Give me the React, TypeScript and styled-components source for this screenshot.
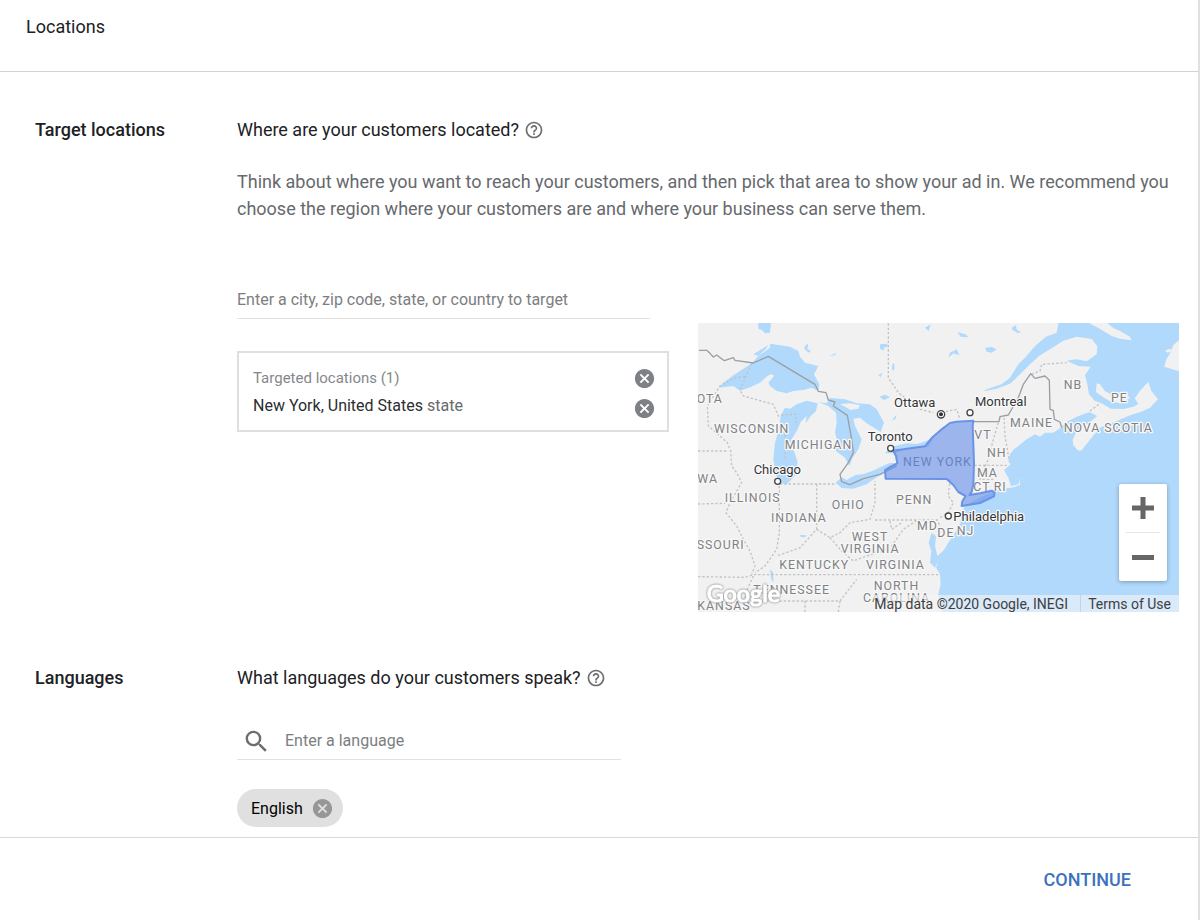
import React from "react";
import styled, { createGlobalStyle } from "styled-components";
import { MdCancel, MdHelpOutline, MdSearch } from "react-icons/md";

const GlobalStyle = createGlobalStyle`
  *, *::before, *::after { box-sizing: border-box; }
  body {
    margin: 0;
    background: #fff;
    color: #202124;
    font-family: Roboto, "Liberation Sans", sans-serif;
  }
  h1, h2, h3, p { margin: 0; }
`;

const Page = styled.div`
  display: flex;
  flex-direction: column;
  min-height: 100vh;
  border-right: 2px solid #e0e0e0;
`;

const Header = styled.header`
  padding: 15px 26px 32px;
  border-bottom: 1px solid #d2d2d2;
`;

const PageTitle = styled.h1`
  font-size: 18px;
  line-height: 24px;
  font-weight: 400;
`;

const Section = styled.section<{ $top: number }>`
  display: grid;
  grid-template-columns: 202px minmax(0, 1fr);
  padding: ${(p) => p.$top}px 19px 0 35px;
`;

const SectionTitle = styled.h2`
  font-size: 18px;
  line-height: 24px;
  font-weight: 500;
`;

const Question = styled.h3`
  display: flex;
  align-items: center;
  gap: 5px;
  font-size: 18px;
  line-height: 24px;
  font-weight: 400;
`;

const IconButton = styled.button<{ $color: string }>`
  display: inline-flex;
  align-items: center;
  justify-content: center;
  padding: 0;
  border: 0;
  background: none;
  color: ${(p) => p.$color};
  cursor: pointer;
`;

const Description = styled.p`
  margin-top: 26px;
  font-size: 18px;
  line-height: 27px;
  color: #66696d;
`;

const Targeting = styled.div`
  display: grid;
  grid-template-columns: minmax(0, 432fr) minmax(0, 481fr);
  gap: 29px;
  margin-top: 58px;
`;

const Field = styled.label<{ $width: number }>`
  display: flex;
  align-items: center;
  gap: 14px;
  height: 39px;
  width: ${(p) => p.$width}px;
  max-width: 100%;
  padding-top: 2px;
  border-bottom: 1px solid #e2e2e2;
  color: #6b6e71;
`;

const TextInput = styled.input`
  flex: 1;
  min-width: 0;
  padding: 0;
  border: 0;
  outline: 0;
  background: none;
  font: 400 16px/24px Roboto, "Liberation Sans", sans-serif;
  color: #202124;
  &::placeholder { color: #7b7e81; opacity: 1; }
`;

const LocationBox = styled.div`
  margin-top: 32px;
  padding: 10px 11px 7px 14px;
  border: 2px solid #dedfdf;
`;

const LocationRow = styled.div`
  display: flex;
  justify-content: space-between;
  height: 30px;
`;

const LocationCount = styled.span`
  font-size: 15px;
  line-height: 30px;
  color: #85888b;
`;

const LocationName = styled.span`
  font-size: 16px;
  line-height: 26px;
  color: #2b2d30;
`;

const LocationKind = styled.span`
  color: #66696d;
`;

const MapFrame = styled.div`
  position: relative;
  height: 289px;
  margin-top: 43px;
  overflow: hidden;
  background: #b1d9fc;
`;

const MapDrawing = styled.svg`
  display: block;
  width: 100%;
  height: 100%;
  font-family: Roboto, "Liberation Sans", sans-serif;
`;

const MapLogo = styled.text`
  font: 500 70px Lato, sans-serif;
  fill: #fff;
  stroke: #fff;
  stroke-width: 3px;
  filter: drop-shadow(0 0 3px #9a9c9e) drop-shadow(0 0 2px #b4b6b8);
`;

const ZoomControl = styled.div`
  position: absolute;
  right: 12px;
  bottom: 31px;
  display: flex;
  flex-direction: column;
  width: 48px;
  padding: 0 7px;
  border-radius: 2px;
  background: #fff;
  box-shadow: 0 1px 4px rgba(0, 0, 0, 0.3);
`;

const ZoomButton = styled.button`
  display: flex;
  align-items: center;
  justify-content: center;
  height: 48px;
  padding: 0;
  border: 0;
  background: none;
  color: #666;
  cursor: pointer;
  & + & { height: 49px; border-top: 1px solid #e6e6e6; }
`;

const Attribution = styled.div`
  position: absolute;
  right: 0;
  bottom: 0;
  display: flex;
  height: 17px;
  font-size: 14px;
  line-height: 18px;
  color: #3c4043;
  background: rgba(245, 245, 245, 0.6);
`;

const Credit = styled.span`
  padding-right: 12px;
`;

const TermsLink = styled.a`
  padding: 0 8px 0 7px;
  border-left: 1px solid #b9d6ee;
  color: inherit;
  text-decoration: none;
`;

const LanguageField = styled.div`
  margin-top: 31px;
`;

const SearchIcon = styled(MdSearch)`
  flex: none;
  margin-left: 5px;
`;

const Chip = styled.div`
  display: inline-flex;
  align-items: center;
  gap: 8px;
  height: 38px;
  margin-top: 29px;
  padding: 0 9px 0 14px;
  border-radius: 19px;
  background: #e0e0e0;
  color: #000;
  font-size: 16px;
`;

const Footer = styled.footer`
  display: flex;
  justify-content: flex-end;
  margin-top: 10px;
  padding: 24px 59px 22px;
  border-top: 1px solid #d8d8d8;
`;

const ContinueButton = styled.button`
  height: 36px;
  padding: 0 8px;
  border: 0;
  background: none;
  font: 500 18px/36px Roboto, "Liberation Sans", sans-serif;
  color: #3c72bd;
  cursor: pointer;
`;

const stateLabels: [string, number, number][] = [
  ["OTA", 20, 262],
  ["WISCONSIN", 72, 350],
  ["MICHIGAN", 284, 400],
  ["WA", 22, 501],
  ["ILLINOIS", 104, 557],
  ["INDIANA", 243, 619],
  ["OHIO", 425, 579],
  ["PENN", 618, 564],
  ["MD", 681, 642],
  ["WEST", 485, 675],
  ["VIRGINIA", 452, 711],
  ["SSOURI", 20, 699],
  ["KENTUCKY", 268, 760],
  ["VIRGINIA", 528, 760],
  ["TENNESSEE", 190, 835],
  ["NORTH", 551, 821],
  ["CAROLINA", 519, 857],
  ["KANSAS", 22, 882],
  ["NB", 1121, 219],
  ["PE", 1263, 259],
  ["MAINE", 960, 332],
  ["NOVA SCOTIA", 1121, 349],
  ["VT", 853, 368],
  ["NH", 891, 423],
  ["MA", 861, 482],
  ["CT", 850, 525],
  ["RI", 911, 525],
  ["DE", 742, 663],
  ["NJ", 800, 656],
];

const cityLabels: [string, number, number][] = [
  ["Ottawa", 612, 273],
  ["Montreal", 855, 270],
  ["Toronto", 533, 376],
  ["Chicago", 191, 474],
  ["Philadelphia", 790, 614],
];

const cityDots: [number, number][] = [
  [840, 290],
  [602, 397],
  [263, 496],
  [775, 600],
];

const lakes = [
  "M88 215 100 200 130 178 185 142 205 120 240 95 240 83 300 92 325 105 330 122 345 140 385 150 372 175 388 205 385 225 365 215 340 222 310 225 290 232 260 225 240 210 235 200 252 180 245 174 232 180 210 200 180 214 150 224 130 210Z",
  "M383 262 350 254 320 265 300 278 285 275 272 300 268 335 255 380 250 430 257 475 270 500 290 505 305 490 322 470 322 435 310 400 303 372 322 342 332 318 350 300 347 322 360 302 378 285Z",
  "M385 258 415 270 438 290 440 320 435 350 442 375 430 385 438 405 465 425 478 450 488 425 505 400 515 370 495 330 490 308 510 305 530 322 552 335 572 348 582 320 560 280 540 265 500 262 465 250 420 246 410 262Z",
  "M437 500 455 484 470 492 495 478 520 474 545 466 585 447 600 441 620 441 620 450 585 470 560 484 530 505 490 518 455 516Z",
  "M585 412 605 392 650 382 680 384 700 378 724 368 735 360 715 392 640 402 612 412Z",
  "M205 21 243 21 240 50 225 52 215 42 205 38Z",
  "M885 96 905 93 920 100 905 110 890 107Z",
  "M568 242 585 236 600 244 582 252Z",
  "M570 85 590 83 595 90 582 96 580 104 570 98Z",
  "M780 110 800 100 808 118 790 112 775 125Z",
  "M802 48 826 55 836 64 812 62Z",
  "M965 35 978 28 980 42 993 48 985 52 968 42Z",
  "M418 120 440 110 434 118Z",
  "M342 96 352 82 355 92 350 98 362 104 358 110 348 104Z",
  "M240 760 250 770 250 800 244 790Z",
  "M330 657 350 658 345 664 332 662Z",
  "M190 115 235 87 228 98 205 120Z",
  "M606 313 620 295 616 310Z",
  "M606 148 612 140 614 158 607 165Z",
  "M705 35 722 25 716 45Z",
  "M565 178 578 170 572 184Z",
  "M725 650 738 660 735 690 742 720 765 700 748 730 735 755 720 740 724 705 716 680Z",
];

const stateBorders =
  "M185 143 150 222 160 240 250 265 265 300 280 296 318 295 318 330M165 182 135 185 90 210 52 270 55 330 90 360 112 380 122 405 125 450 140 470 155 500 120 560 108 590 140 630 160 670 180 705 195 750 185 775M24 405 115 405M285 330 285 432M24 564 105 562M270 504 440 504M268 510 268 650 260 700 225 750 195 770M380 504 380 640 330 695 260 720M380 640 420 665 450 650 480 620 540 610 555 560 555 495M420 665 455 705 490 735 530 720 580 705 605 690 640 640 680 614M555 612 750 612M600 615 605 640 635 620M24 782 165 784 190 776 750 776M190 780 165 835 170 888M190 855 450 855 500 790M345 855 345 888M445 888 450 855M595 22 595 185 625 230 690 280 730 290M755 290 775 285 800 280 810 310M925 320 910 370 895 430 885 450M942 305 945 360 957 430M853 448 950 448M885 448 870 490 910 490M1025 175 1050 165 1055 145 1130 140M1200 285 1230 262M780 490 775 540 790 560 775 590 750 605M745 620 760 650";

const newYork =
  "M587 488 585 462 602 452 622 442 618 420 610 404 640 400 705 391 725 366 755 340 780 321 800 317 850 314 848 330 852 440 850 505 845 528 838 537 870 532 905 524 914 530 912 541 870 561 815 570 817 556 827 540 805 528 790 507 770 489Z";

function MapLand() {
  return (
    <>
      <rect x="24" y="21" width="1443" height="867" fill="#f1f1f1" />
      <path
        fill="#b1d9fc"
        d="M1105 21 1100 50 1068 62 1035 90 1005 125 985 145 960 185 935 205 890 220 880 226 920 218 960 203 990 175 1020 145 1050 118 1085 97 1120 74 1160 62 1205 69 1222 90 1220 115 1190 136 1160 130 1130 134 1165 150 1202 152 1185 178 1192 205 1197 235 1215 255 1235 262 1262 278 1300 279 1330 272 1345 264 1334 247 1352 222 1375 197 1384 225 1404 250 1380 275 1352 288 1320 298 1280 315 1230 335 1202 368 1175 403 1165 404 1150 388 1148 372 1160 345 1200 318 1222 300 1198 288 1160 302 1125 320 1112 335 1090 350 1065 350 1050 362 1035 355 1010 370 985 390 972 400 960 415 955 436 962 445 942 462 955 485 963 510 985 505 990 494 982 488 990 492 990 506 972 514 955 516 920 524 880 540 825 568 815 590 812 620 795 650 775 680 760 705 745 735 738 755 750 775 752 805 745 835 755 888 1467 888 1467 21Z"
      />
      <g fill="#b1d9fc">
        {lakes.map((d) => (
          <path key={d} d={d} />
        ))}
      </g>
      <g fill="#f1f1f1">
        <path d="M1197 21 1232 40 1265 60 1290 68 1325 73 1320 62 1290 45 1270 36 1252 21Z" />
        <path d="M1467 72 1450 88 1440 112 1428 132 1423 152 1467 166Z" />
        <path d="M1425 104 1440 98 1446 106 1432 110Z" />
        <path d="M1220 202 1230 205 1245 226 1270 238 1310 236 1320 246 1290 262 1260 256 1240 244 1218 228Z" />
        <path d="M450 264 480 262 510 268 505 278 482 282Z" />
        <path d="M738 640 785 640 765 672 752 700 742 712 740 680Z" />
      </g>
    </>
  );
}

function LocationMap() {
  return (
    <MapFrame>
      <MapDrawing
        viewBox="24 21 1443 867"
        preserveAspectRatio="xMidYMid slice"
        role="img"
        aria-label="Map with New York state highlighted"
      >
        <MapLand />
        <path d={stateBorders} fill="none" stroke="#c2c2c2" strokeWidth="4" strokeDasharray="7 6" />
        <path
          d="M27 103 50 103 60 112 70 123 80 117 103 134 130 125 135 133 190 141 235 121 375 205 385 226 408 230 415 252 435 258 430 270 472 298 485 370 490 410 475 440 450 475 455 497 480 506 520 488 570 475 620 450M850 317 927 317 930 302 955 297 985 245 1000 205 1022 173 1035 187 1065 180 1078 193 1080 280 1090 283 1093 310 1110 318 1115 335"
          fill="none"
          stroke="#9b9fa2"
          strokeWidth="4"
          strokeLinejoin="round"
        />
        <g
          fontSize="37"
          letterSpacing="3"
          fill="#7f8285"
          stroke="#f7f7f7"
          strokeWidth="8"
          strokeLinejoin="round"
          paintOrder="stroke"
        >
          {stateLabels.map(([name, x, y]) => (
            <text key={name + y + x} x={x} y={y}>
              {name}
            </text>
          ))}
        </g>
        <path d={newYork} fill="#5f8bea" fillOpacity="0.58" stroke="#6a93e6" strokeWidth="6" strokeLinejoin="round" />
        <text x="639" y="450" fontSize="37" letterSpacing="3" fill="#6783bf">
          NEW YORK
        </text>
        <g fill="#fff" stroke="#444" strokeWidth="4">
          {cityDots.map(([cx, cy]) => (
            <circle key={cx} cx={cx} cy={cy} r="9" />
          ))}
          <circle cx="753" cy="295" r="11" />
        </g>
        <circle cx="753" cy="295" r="6" fill="#333" />
        <g
          fontSize="39"
          fill="#333639"
          stroke="#fafafa"
          strokeWidth="7"
          strokeLinejoin="round"
          paintOrder="stroke"
        >
          {cityLabels.map(([name, x, y]) => (
            <text key={name} x={x} y={y}>
              {name}
            </text>
          ))}
        </g>
        <MapLogo x="50" y="858">
          Google
        </MapLogo>
      </MapDrawing>
      <ZoomControl>
        <ZoomButton type="button" aria-label="Zoom in">
          <svg width="22" height="22" viewBox="0 0 22 22" aria-hidden="true">
            <path d="M8.5 0h5v8.5H22v5h-8.500V22h-5v-8.500H0v-5h8.500z" fill="currentColor" />
          </svg>
        </ZoomButton>
        <ZoomButton type="button" aria-label="Zoom out">
          <svg width="22" height="22" viewBox="0 0 22 22" aria-hidden="true">
            <path d="M0 9h22v5H0z" fill="currentColor" />
          </svg>
        </ZoomButton>
      </ZoomControl>
      <Attribution>
        <Credit>Map data ©2020 Google, INEGI</Credit>
        <TermsLink href="#terms">Terms of Use</TermsLink>
      </Attribution>
    </MapFrame>
  );
}

export default function App() {
  return (
    <Page>
      <GlobalStyle />
      <Header>
        <PageTitle>Locations</PageTitle>
      </Header>
      <main>
        <Section $top={46}>
          <SectionTitle>Target locations</SectionTitle>
          <div>
            <Question>
              Where are your customers located?
              <IconButton type="button" $color="#6b6e71" aria-label="Help with locations">
                <MdHelpOutline size={20} />
              </IconButton>
            </Question>
            <Description>
              Think about where you want to reach your customers, and then pick that area to show your ad in. We
              recommend you choose the region where your customers are and where your business can serve them.
            </Description>
            <Targeting>
              <div>
                <Field $width={413}>
                  <TextInput
                    type="text"
                    aria-label="Location to target"
                    placeholder="Enter a city, zip code, state, or country to target"
                  />
                </Field>
                <LocationBox>
                  <LocationRow>
                    <LocationCount>Targeted locations (1)</LocationCount>
                    <IconButton type="button" $color="#7d8084" aria-label="Remove all locations">
                      <MdCancel size={23} />
                    </IconButton>
                  </LocationRow>
                  <LocationRow>
                    <LocationName>
                      New York, United States <LocationKind>state</LocationKind>
                    </LocationName>
                    <IconButton type="button" $color="#7d8084" aria-label="Remove New York">
                      <MdCancel size={23} />
                    </IconButton>
                  </LocationRow>
                </LocationBox>
              </div>
              <LocationMap />
            </Targeting>
          </div>
        </Section>
        <Section $top={54}>
          <SectionTitle>Languages</SectionTitle>
          <div>
            <Question>
              What languages do your customers speak?
              <IconButton type="button" $color="#6b6e71" aria-label="Help with languages">
                <MdHelpOutline size={20} />
              </IconButton>
            </Question>
            <LanguageField>
              <Field $width={384}>
                <SearchIcon size={29} />
                <TextInput type="text" aria-label="Language" placeholder="Enter a language" />
              </Field>
            </LanguageField>
            <Chip>
              English
              <IconButton type="button" $color="#979797" aria-label="Remove English">
                <MdCancel size={23} />
              </IconButton>
            </Chip>
          </div>
        </Section>
      </main>
      <Footer>
        <ContinueButton type="button">CONTINUE</ContinueButton>
      </Footer>
    </Page>
  );
}
